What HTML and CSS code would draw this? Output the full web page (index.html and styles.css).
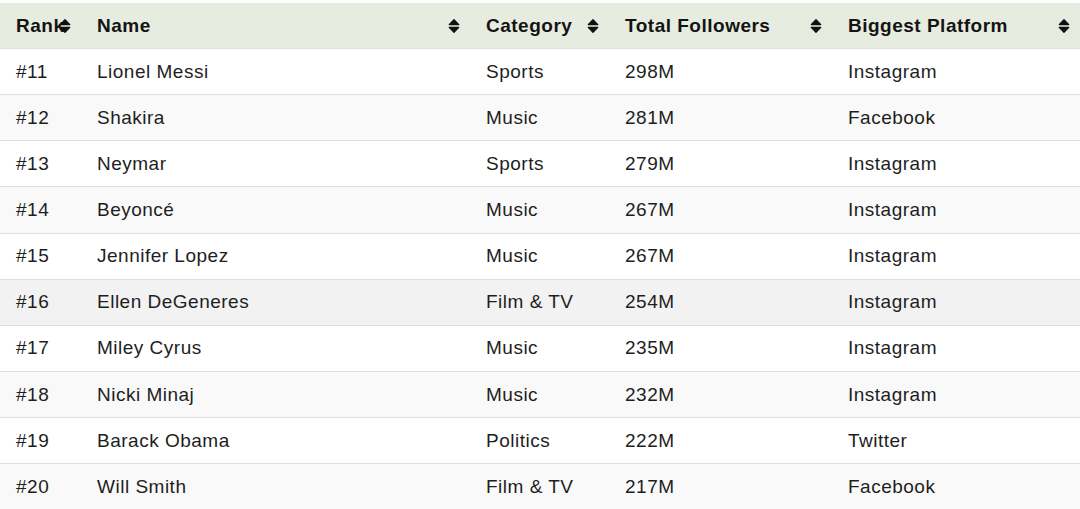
FILE: index.html
```html
<!DOCTYPE html>
<html>
<head>
<meta charset="utf-8">
<link rel="stylesheet" href="styles.css">
</head>
<body>
<table class="rank-table">
  <colgroup>
    <col class="c-rank"><col class="c-name"><col class="c-cat"><col class="c-fol"><col class="c-plat">
  </colgroup>
  <thead>
    <tr>
      <th>Rank<svg class="sort" viewBox="0 0 12 16"><path d="M1.2 6.6 L6 1.6 L10.8 6.6 Z M1.2 9.4 L6 14.4 L10.8 9.4 Z" fill="#111" stroke="#111" stroke-width="1.2" stroke-linejoin="round"/></svg></th>
      <th>Name<svg class="sort" viewBox="0 0 12 16"><path d="M1.2 6.6 L6 1.6 L10.8 6.6 Z M1.2 9.4 L6 14.4 L10.8 9.4 Z" fill="#111" stroke="#111" stroke-width="1.2" stroke-linejoin="round"/></svg></th>
      <th>Category<svg class="sort" viewBox="0 0 12 16"><path d="M1.2 6.6 L6 1.6 L10.8 6.6 Z M1.2 9.4 L6 14.4 L10.8 9.4 Z" fill="#111" stroke="#111" stroke-width="1.2" stroke-linejoin="round"/></svg></th>
      <th>Total Followers<svg class="sort" viewBox="0 0 12 16"><path d="M1.2 6.6 L6 1.6 L10.8 6.6 Z M1.2 9.4 L6 14.4 L10.8 9.4 Z" fill="#111" stroke="#111" stroke-width="1.2" stroke-linejoin="round"/></svg></th>
      <th>Biggest Platform<svg class="sort" viewBox="0 0 12 16"><path d="M1.2 6.6 L6 1.6 L10.8 6.6 Z M1.2 9.4 L6 14.4 L10.8 9.4 Z" fill="#111" stroke="#111" stroke-width="1.2" stroke-linejoin="round"/></svg></th>
    </tr>
  </thead>
  <tbody>
    <tr><td>#11</td><td>Lionel Messi</td><td>Sports</td><td>298M</td><td>Instagram</td></tr>
    <tr><td>#12</td><td>Shakira</td><td>Music</td><td>281M</td><td>Facebook</td></tr>
    <tr><td>#13</td><td>Neymar</td><td>Sports</td><td>279M</td><td>Instagram</td></tr>
    <tr><td>#14</td><td>Beyoncé</td><td>Music</td><td>267M</td><td>Instagram</td></tr>
    <tr><td>#15</td><td>Jennifer Lopez</td><td>Music</td><td>267M</td><td>Instagram</td></tr>
    <tr class="hover"><td>#16</td><td>Ellen DeGeneres</td><td>Film &amp; TV</td><td>254M</td><td>Instagram</td></tr>
    <tr><td>#17</td><td>Miley Cyrus</td><td>Music</td><td>235M</td><td>Instagram</td></tr>
    <tr><td>#18</td><td>Nicki Minaj</td><td>Music</td><td>232M</td><td>Instagram</td></tr>
    <tr><td>#19</td><td>Barack Obama</td><td>Politics</td><td>222M</td><td>Twitter</td></tr>
    <tr><td>#20</td><td>Will Smith</td><td>Film &amp; TV</td><td>217M</td><td>Facebook</td></tr>
  </tbody>
</table>
</body>
</html>
```

FILE: styles.css
```css
html, body {
  margin: 0;
  padding: 0;
  background: #ffffff;
}
body {
  padding-top: 3px;
  font-family: "Liberation Sans", Arial, sans-serif;
  overflow: hidden;
}
.rank-table {
  width: 1080px;
  border-collapse: collapse;
  table-layout: fixed;
  font-size: 19px;
  letter-spacing: 0.5px;
  color: #1e1e1e;
}
.c-rank { width: 81px; }
.c-name { width: 389px; }
.c-cat { width: 139px; }
.c-fol { width: 223px; }
.c-plat { width: 248px; }

.rank-table th {
  position: relative;
  background: #e6ecdf;
  text-align: left;
  font-weight: bold;
  color: #141414;
  height: 45px;
  padding: 0 0 0 16px;
  line-height: 22px;
  border-bottom: 1px solid #dde2d6;
  white-space: nowrap;
  overflow: visible;
}
.sort {
  position: absolute;
  right: 10px;
  top: 50%;
  width: 12px;
  height: 16px;
  margin-top: -8px;
}
.rank-table td {
  height: 45.15px;
  padding: 0 0 0 16px;
  line-height: 22px;
  border-bottom: 1px solid #dedede;
  white-space: nowrap;
}
.rank-table tbody tr:nth-child(even) td {
  background: #f9f9f9;
}
.rank-table tbody tr.hover td {
  background: #f2f2f2;
}
```
